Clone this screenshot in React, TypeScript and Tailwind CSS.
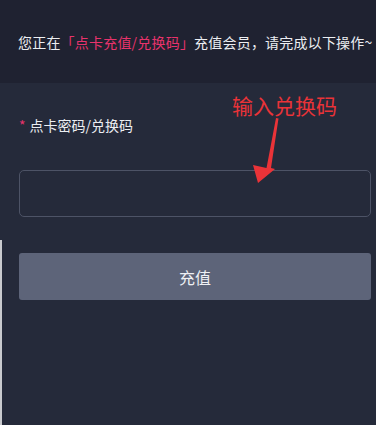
import React from "react";

const font = { fontFamily: '"Noto Sans CJK SC", "Noto Sans", sans-serif' };

// red hand-drawn pointer from the note down into the input
const Arrow = () => (
  <svg width="40" height="70" viewBox="0 0 40 70" className="absolute left-[248px] top-[116px]">
    <polygon points="28,2 30.5,2.5 23,52 27,53 10,67 5,49 18.5,52" fill="#ea3338" />
  </svg>
);

export default function App() {
  return (
    <div className="relative w-[376px] h-[425px] overflow-hidden bg-[#252a3a]" style={font}>
      {/* notice header */}
      <div className="h-[83px] bg-[#1f2231] pl-[18px] pt-[31px]">
        <p className="whitespace-nowrap text-[14px] leading-[22px] tracking-[0.2px] text-[#eceef2]">
          您正在<span className="text-[#e8336c]">「点卡充值/兑换码」</span>充值会员，请完成以下操作~
        </p>
      </div>

      {/* form */}
      <div className="flex flex-col pl-[19px] pr-[5px] pt-[31px]">
        <label className="flex items-center text-[14px] leading-[22px] text-[#eceef2]">
          <span className="mr-[4px] text-[#e8336c]">*</span>
          点卡密码/兑换码
        </label>
        <div className="mt-[34px] h-[47px] rounded-[5px] border border-[#4d5366] bg-[#252a3a]" />
        <button className="mt-[36px] flex h-[47px] w-full items-center justify-center rounded-[3px] bg-[#5d6479] text-[16px] text-[#eef0f4]">
          充值
        </button>
      </div>

      {/* annotation */}
      <div className="absolute left-[232px] top-[92px] text-[21px] leading-[26px] text-[#ea3338]">输入兑换码</div>
      <Arrow />

      <div className="absolute left-0 top-[240px] bottom-0 w-[2px] bg-[#c9cace]" />
    </div>
  );
}
